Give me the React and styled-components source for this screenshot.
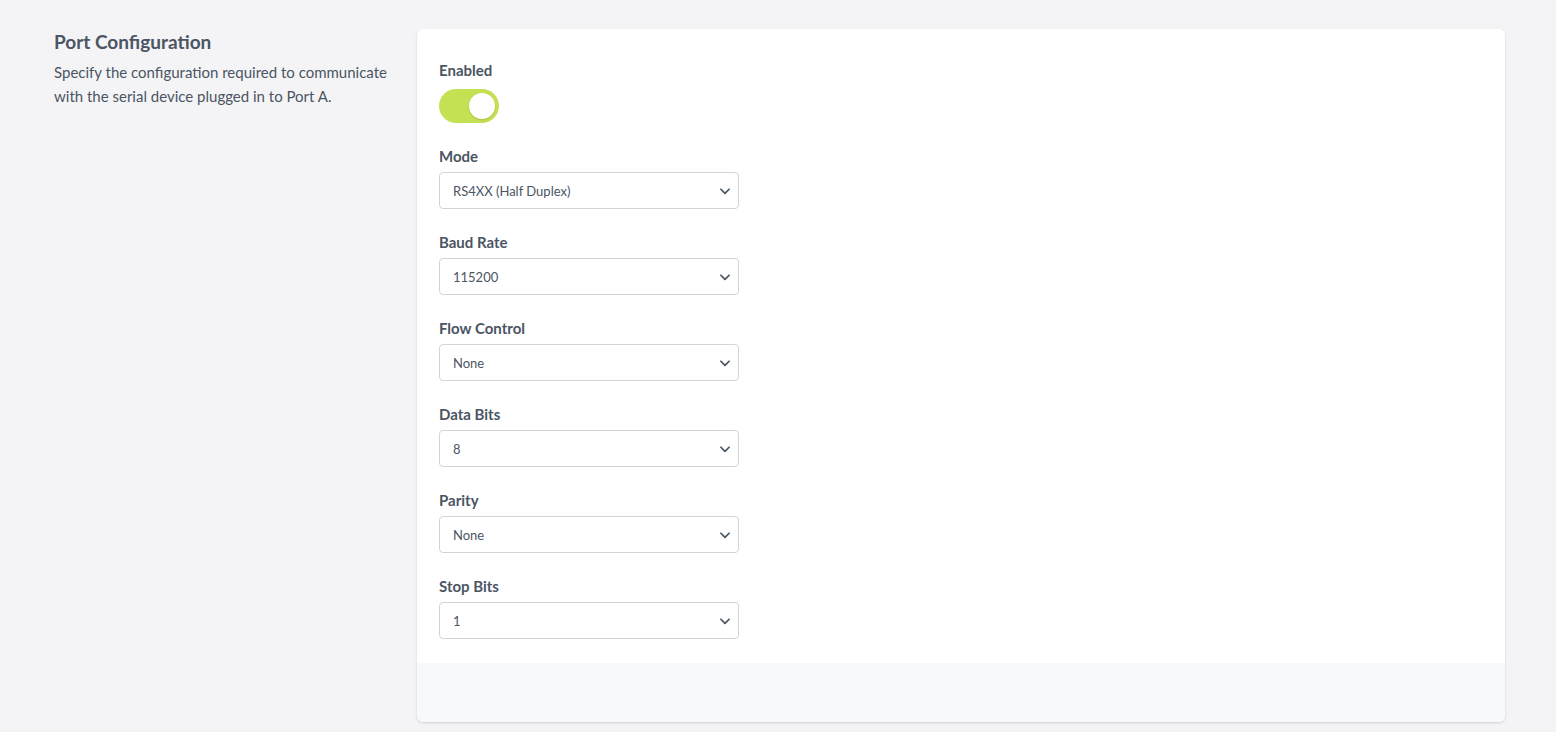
import React from 'react'
import styled, { createGlobalStyle } from 'styled-components'

const GlobalStyle = createGlobalStyle`
  * { box-sizing: border-box; }
  html, body {
    margin: 0;
    padding: 0;
    background: #f4f4f6;
    font-family: Lato, "Liberation Sans", sans-serif;
  }
`

const Page = styled.div`
  display: flex;
  align-items: flex-start;
  gap: 23px;
  padding: 29px 51px 10px 54px;
  min-height: 732px;
`

const Intro = styled.div`
  width: 340px;
  flex-shrink: 0;
`

const Title = styled.h2`
  margin: 0 0 6px;
  padding-top: 1px;
  font-size: 19px;
  line-height: 24px;
  font-weight: 700;
  color: #4b5563;
`

const Description = styled.p`
  margin: 0;
  font-size: 15px;
  line-height: 24px;
  color: #4b5563;
`

const Card = styled.div`
  flex: 1;
  background: #fff;
  border-radius: 6px;
  box-shadow: 0 1px 3px rgba(0, 0, 0, 0.1), 0 1px 2px rgba(0, 0, 0, 0.06);
  overflow: hidden;
`

const CardBody = styled.div`
  padding: 31px 22px 24px;
  display: flex;
  flex-direction: column;
  gap: 23px;
`

const CardFooter = styled.div`
  height: 59px;
  background: #f8f9fa;
`

const Field = styled.div`
  display: flex;
  flex-direction: column;
  gap: 6px;
`

const Label = styled.label`
  font-size: 15px;
  line-height: 20px;
  font-weight: 700;
  color: #4b5563;
`

const Toggle = styled.div`
  position: relative;
  width: 60px;
  height: 34px;
  margin-top: 3px;
  border-radius: 17px;
  background: ${p => (p.$on ? '#c4e153' : '#d1d5db')};
`

const Knob = styled.span`
  position: absolute;
  top: 4px;
  left: ${p => (p.$on ? '30px' : '4px')};
  width: 26px;
  height: 26px;
  border-radius: 50%;
  background: #fff;
  box-shadow: 0 1px 2px rgba(0, 0, 0, 0.15);
`

const SelectBox = styled.div`
  width: 300px;
  height: 37px;
  display: flex;
  align-items: center;
  justify-content: space-between;
  padding: 0 6px 0 13px;
  border: 1px solid #d1d5db;
  border-radius: 4px;
  background: #fff;
  font-size: 13px;
  color: #4b5563;
`

const Chevron = () => (
  <svg width="14" height="14" viewBox="0 0 24 24" fill="none" stroke="#4b5563" strokeWidth="3" strokeLinecap="round" strokeLinejoin="round">
    <path d="M5 9l7 7 7-7" />
  </svg>
)

const fields = [
  ['Mode', 'RS4XX (Half Duplex)'],
  ['Baud Rate', '115200'],
  ['Flow Control', 'None'],
  ['Data Bits', '8'],
  ['Parity', 'None'],
  ['Stop Bits', '1'],
]

export default function App() {
  return (
    <>
      <GlobalStyle />
      <Page>
        <Intro>
          <Title>Port Configuration</Title>
          <Description>
            Specify the configuration required to communicate with the serial device plugged in to Port A.
          </Description>
        </Intro>
        <Card>
          <CardBody>
            <Field>
              <Label>Enabled</Label>
              <Toggle $on>
                <Knob $on />
              </Toggle>
            </Field>
            {fields.map(([label, value]) => (
              <Field key={label}>
                <Label>{label}</Label>
                <SelectBox>
                  <span>{value}</span>
                  <Chevron />
                </SelectBox>
              </Field>
            ))}
          </CardBody>
          <CardFooter />
        </Card>
      </Page>
    </>
  )
}
